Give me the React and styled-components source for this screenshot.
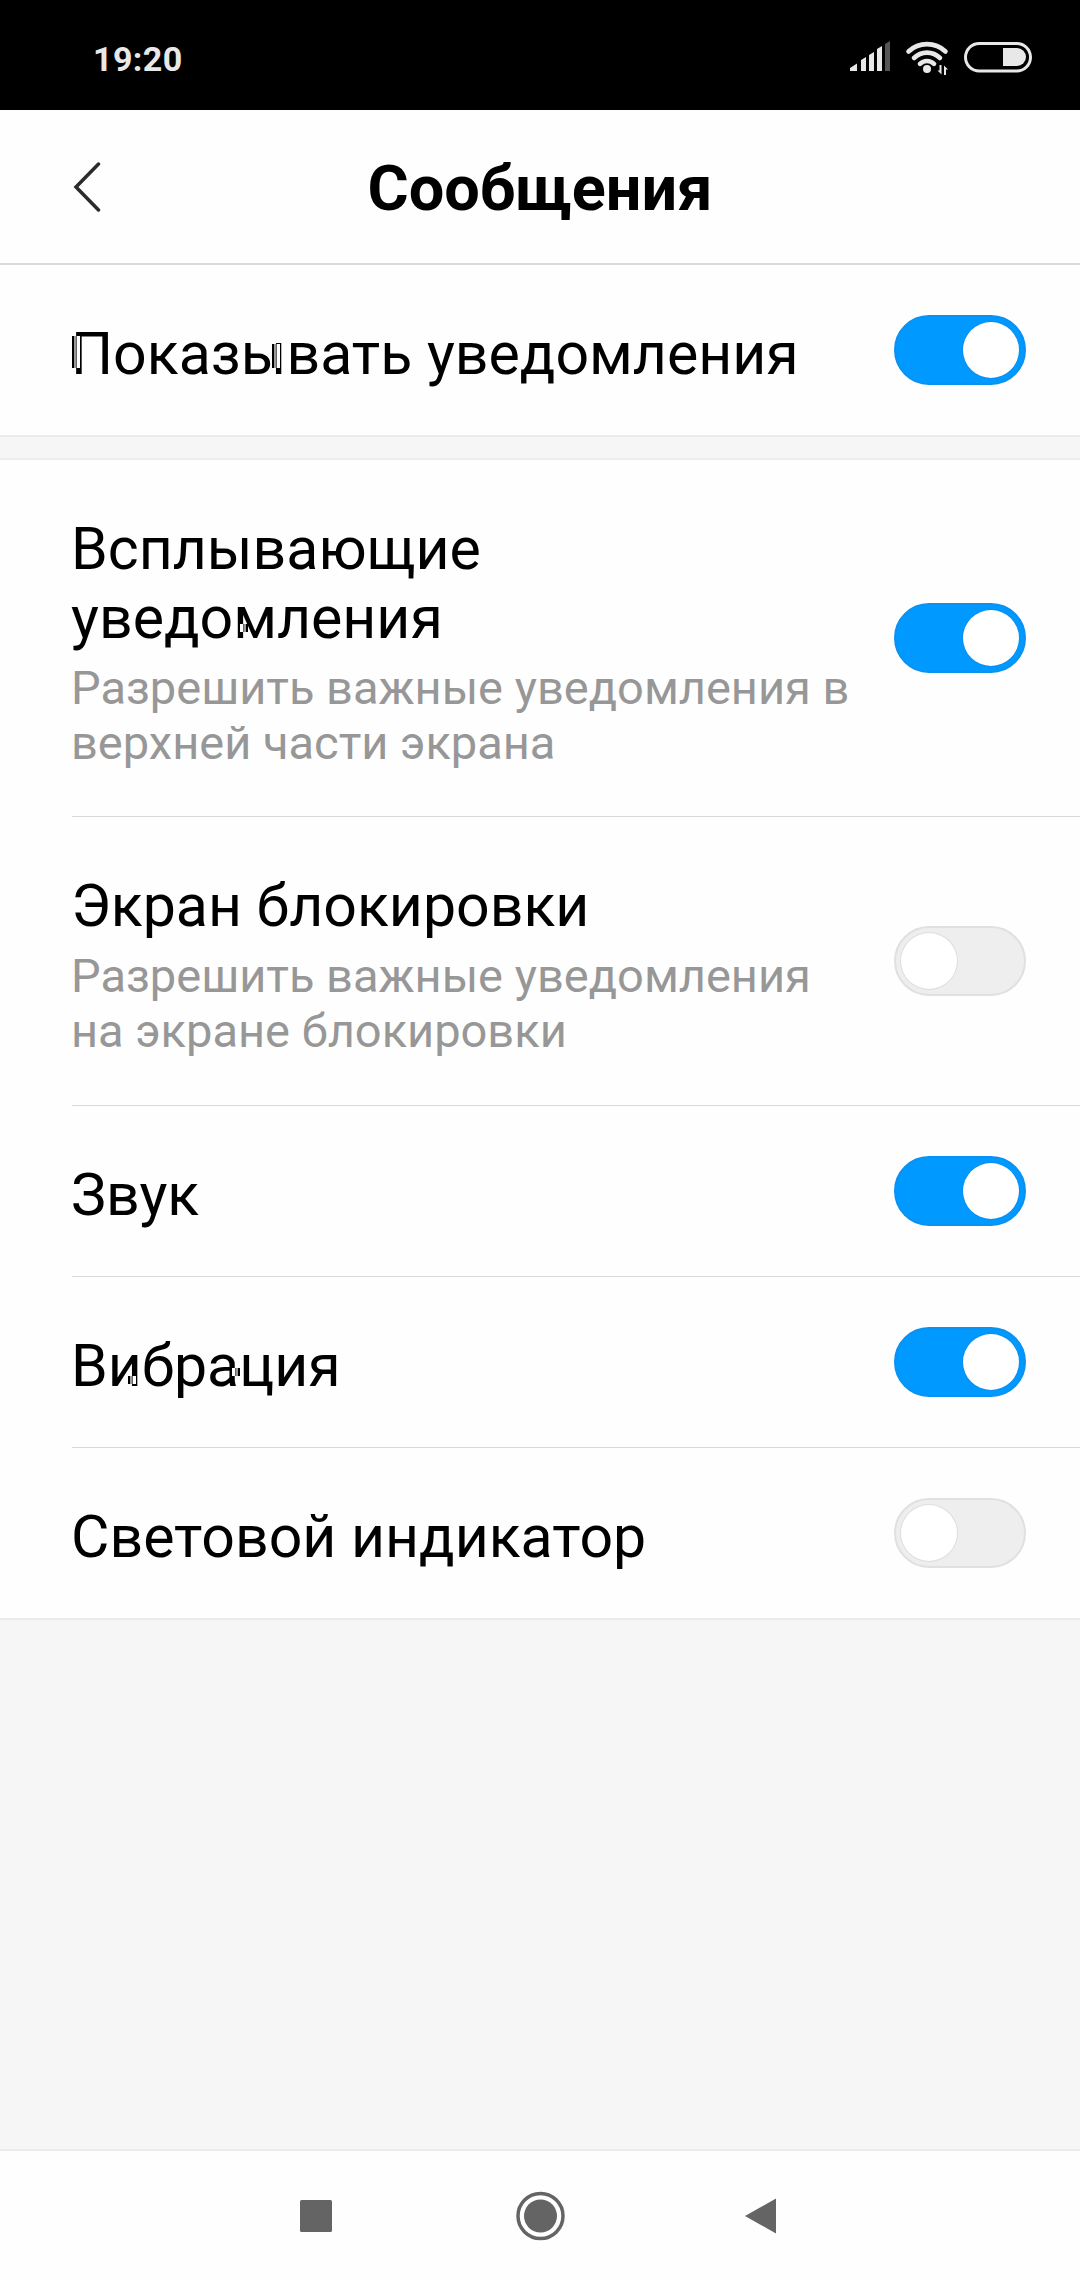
import { useState } from "react";
import styled, { createGlobalStyle } from "styled-components";

const GlobalStyle = createGlobalStyle`
  * {
    box-sizing: border-box;
  }
  body {
    margin: 0;
    background: #f6f6f6;
    font-family: Roboto, "Noto Sans", sans-serif;
  }
`;

const Screen = styled.div`
  width: 1080px;
  height: 2280px;
  display: flex;
  flex-direction: column;
  background: #f6f6f6;
  overflow: hidden;
`;

const StatusBar = styled.div`
  height: 110px;
  flex: none;
  display: flex;
  align-items: center;
  justify-content: space-between;
  padding: 8px 46px 0 93px;
  background: #000;
  color: #e8e8e8;
`;

const Clock = styled.span`
  font-size: 34px;
  font-weight: 700;
  line-height: 40px;
  letter-spacing: 0.4px;
`;

const Header = styled.header`
  height: 155px;
  flex: none;
  display: grid;
  grid-template-columns: 140px 1fr 140px;
  align-items: center;
  background: #fefefe;
  border-bottom: 2px solid #d9d9d9;
`;

const BackButton = styled.button`
  height: 100px;
  padding: 1px 0 0 72px;
  border: 0;
  background: none;
  display: flex;
  align-items: center;
`;

const Title = styled.h1`
  margin: 4px 0 0;
  font-size: 63px;
  font-weight: 700;
  line-height: 72px;
  text-align: center;
  color: #000;
`;

const Section = styled.section`
  flex: none;
  background: #fefefe;
  border-bottom: 2px solid #ececec;
  border-top: ${(p) => (p.$spaced ? "2px solid #ececec" : "0")};
  margin-top: ${(p) => (p.$spaced ? "21px" : "0")};
`;

const Row = styled.div`
  position: relative;
  height: ${(p) => p.$height}px;
  margin-left: 72px;
  padding-right: 54px;
  display: flex;
  align-items: center;
  justify-content: space-between;

  & + & {
    border-top: 1px solid #d8d8d8;
  }
`;

const Texts = styled.div`
  width: 800px;
  margin-left: -1px;
  padding-top: 7px;
`;

const Label = styled.div`
  font-size: 59px;
  line-height: 69px;
  color: #000;
  white-space: pre-line;
`;

const Hint = styled.div`
  margin-top: 8px;
  font-size: 47px;
  line-height: 55px;
  color: #979797;
  white-space: pre-line;
`;

/* small striped speck lying over a letter */
const Speck = styled.span`
  position: absolute;
  left: ${(p) => p.$x}px;
  top: ${(p) => p.$y}px;
  width: 8px;
  height: ${(p) => p.$h}px;
  background: linear-gradient(
    ${(p) => (p.$flip ? "270deg" : "90deg")},
    #000 0 2px,
    #999 2px 4px,
    #666 4px 5px,
    #fff 5px 8px
  );
`;

const Switch = styled.button`
  width: 132px;
  height: 70px;
  flex: none;
  padding: 0 5px;
  border: 2px solid ${(p) => (p.$on ? "#0a92f2" : "#e0e0e0")};
  border-radius: 35px;
  background: ${(p) => (p.$on ? "#0099ff" : "#eeeeee")};
  display: flex;
  align-items: center;
  justify-content: ${(p) => (p.$on ? "flex-end" : "flex-start")};
`;

const Knob = styled.span`
  width: 56px;
  height: 56px;
  border-radius: 50%;
  background: #fff;
  box-shadow: 0 0 0 1px ${(p) => (p.$on ? "#0a8ff0" : "#dedede")};
`;

const NavBar = styled.nav`
  height: 131px;
  flex: none;
  margin-top: auto;
  border-top: 2px solid #ececec;
  background: #fefefe;
  display: flex;
  justify-content: center;
  align-items: center;
`;

const general = [
  {
    id: "show",
    label: "Показывать уведомления",
    on: true,
    height: 170,
    specks: [
      { x: 0, y: 71, h: 32 },
      { x: 200, y: 79, h: 24 },
    ],
  },
];

const details = [
  {
    id: "popup",
    label: "Всплывающие\nуведомления",
    hint: "Разрешить важные уведомления в\nверхней части экрана",
    on: true,
    height: 356,
    specks: [{ x: 168, y: 164, h: 8, flip: true }],
  },
  {
    id: "lock",
    label: "Экран блокировки",
    hint: "Разрешить важные уведомления\nна экране блокировки",
    on: false,
    height: 289,
  },
  { id: "sound", label: "Звук", on: true, height: 171 },
  {
    id: "vibration",
    label: "Вибрация",
    on: true,
    height: 171,
    specks: [
      { x: 56, y: 99, h: 8 },
      { x: 160, y: 91, h: 8, flip: true },
    ],
  },
  { id: "light", label: "Световой индикатор", on: false, height: 171 },
];

function StatusIcons() {
  return (
    <svg width="184" height="40" viewBox="850 40 184 40" fill="#e8e8e8">
      <path d="M850 72v-3l7-4.500v7.500zM861 72V61l5-3v14zM869 72V56l5-3v19zM877 72V50l5-3v25z" />
      <path d="M885 72V45l5-3v30z" fill="#555" />
      <g fill="none" stroke="#e8e8e8" strokeWidth="4.600" strokeLinecap="round">
        <path d="M908.500 52.500a27 27 0 0 1 37 0" />
        <path d="M914 59a18.500 18.500 0 0 1 26 0" />
        <path d="M920 64.800a10 10 0 0 1 14 0" />
      </g>
      <circle cx="927" cy="70" r="4" />
      <path d="M941.500 66v9.500l-4-4h2v-5.500zM944 76v-9.500l4 4h-2v5.500z" />
      <rect x="965.500" y="44.500" width="65" height="27.500" rx="13.750" fill="none" stroke="#e8e8e8" strokeWidth="3" />
      <path d="M1003 49h14a9 9 0 0 1 0 18h-14z" />
    </svg>
  );
}

function Item({ item }) {
  const [on, setOn] = useState(item.on);
  return (
    <Row $height={item.height}>
      <Texts>
        <Label>{item.label}</Label>
        {item.hint && <Hint>{item.hint}</Hint>}
      </Texts>
      {item.specks?.map((s) => (
        <Speck key={s.x} $x={s.x} $y={s.y} $h={s.h} $flip={s.flip} />
      ))}
      <Switch $on={on} onClick={() => setOn(!on)} role="switch" aria-checked={on}>
        <Knob $on={on} />
      </Switch>
    </Row>
  );
}

function App() {
  return (
    <>
      <GlobalStyle />
      <Screen>
        <StatusBar>
          <Clock>19:20</Clock>
          <StatusIcons />
        </StatusBar>
        <Header>
          <BackButton>
            <svg width="30" height="50" viewBox="0 0 30 50">
              <path d="M26.500 2L4 25L26.500 48" fill="none" stroke="#2b2b2b" strokeWidth="3.500" strokeLinecap="round" />
            </svg>
          </BackButton>
          <Title>Сообщения</Title>
        </Header>
        <Section>
          {general.map((item) => (
            <Item key={item.id} item={item} />
          ))}
        </Section>
        <Section $spaced>
          {details.map((item) => (
            <Item key={item.id} item={item} />
          ))}
        </Section>
        <NavBar>
          <svg width="480" height="60" viewBox="300 2185 480 60" fill="#646464">
            <rect x="300" y="2199" width="32" height="32" rx="1.500" />
            <circle cx="540.500" cy="2215" r="22.500" fill="none" stroke="#646464" strokeWidth="3.500" />
            <circle cx="540.500" cy="2215" r="16.500" />
            <path d="M745 2215L776 2197.500V2232.500Z" />
          </svg>
        </NavBar>
      </Screen>
    </>
  );
}

export default App;
